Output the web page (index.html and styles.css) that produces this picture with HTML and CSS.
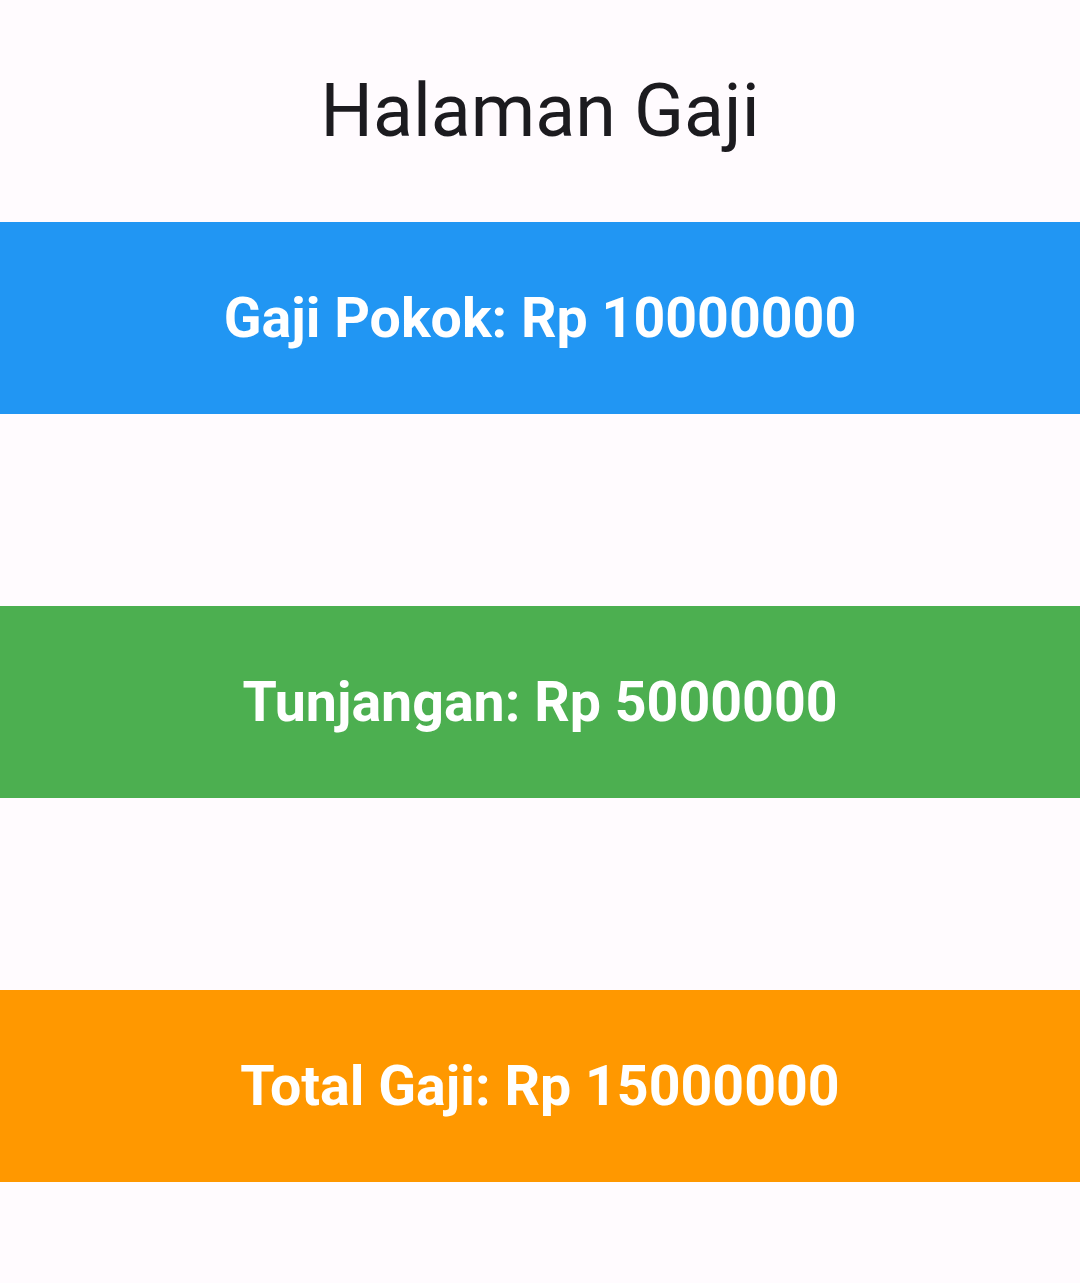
FILE: index.html
```html
<!DOCTYPE html>
<html lang="id">
<head>
<meta charset="utf-8">
<title>Halaman Gaji</title>
<link rel="stylesheet" href="styles.css">
</head>
<body>
<main class="page">
  <h1 class="title">Halaman Gaji</h1>
  <div class="list">
    <div class="bar bar-blue">Gaji Pokok: Rp 10000000</div>
    <div class="bar bar-green">Tunjangan: Rp 5000000</div>
    <div class="bar bar-orange">Total Gaji: Rp 15000000</div>
  </div>
</main>
</body>
</html>
```
FILE: styles.css
```css
html, body {
  margin: 0;
  padding: 0;
  background: #FFFBFE;
  font-family: Roboto, "Noto Sans", sans-serif;
}
.page {
  width: 1080px;
  min-height: 1283px;
}
.title {
  margin: 0;
  height: 222px;
  display: flex;
  align-items: center;
  justify-content: center;
  font-size: 73.5px;
  font-weight: 400;
  color: #1C1B1F;
  letter-spacing: 0;
}
.list {
  display: flex;
  flex-direction: column;
  gap: 192px;
}
.bar {
  height: 192px;
  display: flex;
  align-items: center;
  justify-content: center;
  color: #FFFFFF;
  font-size: 55.5px;
  font-weight: 700;
}
.bar-blue { background: #2196F3; }
.bar-green { background: #4CAF50; }
.bar-orange { background: #FF9800; }
```
